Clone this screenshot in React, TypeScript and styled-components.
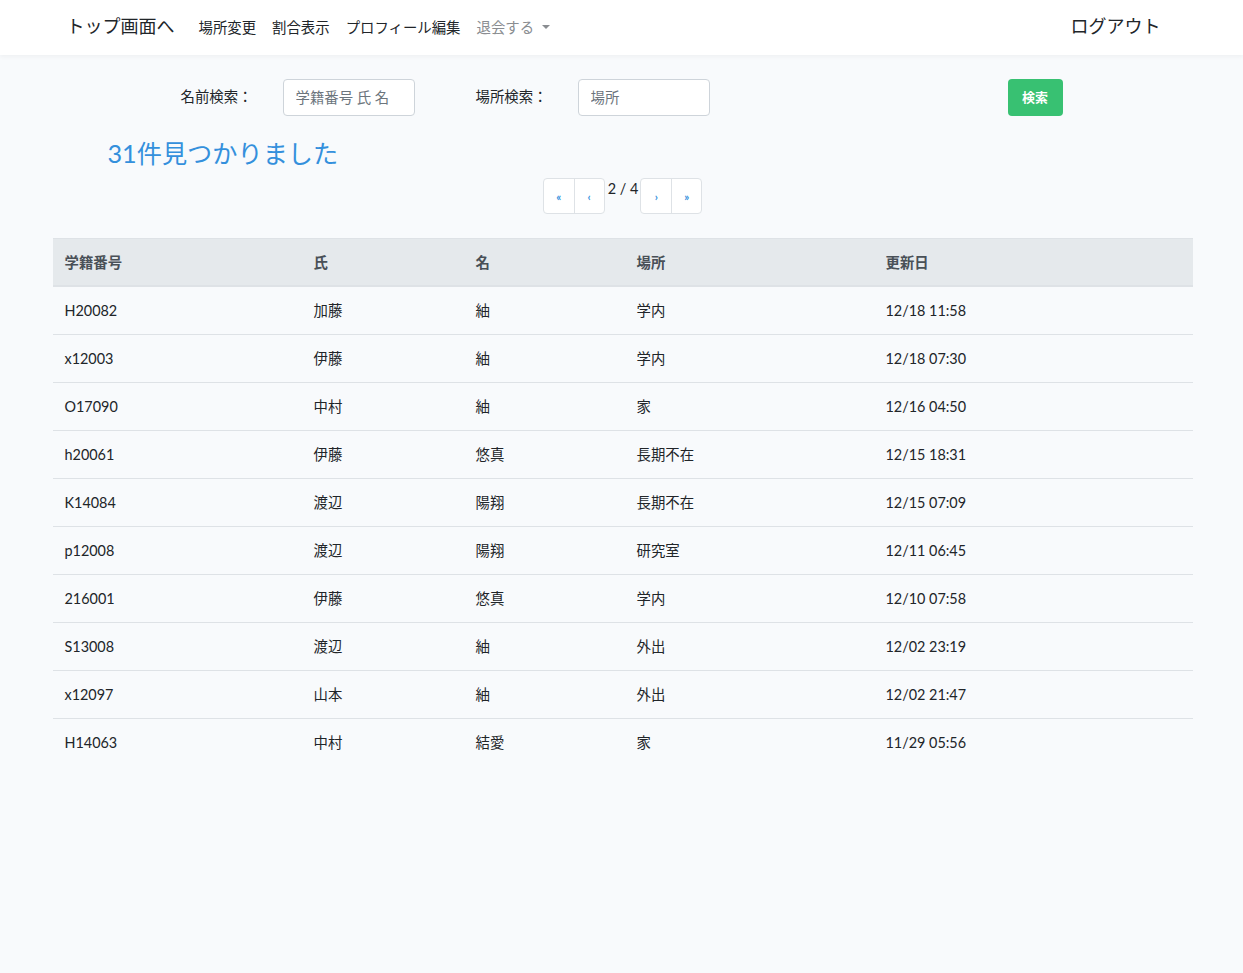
import React from 'react';
import styled, { createGlobalStyle } from 'styled-components';

const GlobalStyle = createGlobalStyle`
  body {
    margin: 0;
    background: #f8fafc;
    color: #212529;
    font-family: Lato, "Noto Sans CJK JP", sans-serif;
    font-size: 14.4px;
    line-height: 1.6;
  }
  * { box-sizing: border-box; }
`;

const Navbar = styled.nav`
  height: 55px;
  background: #fff;
  box-shadow: 0 2px 4px rgba(0, 0, 0, 0.04);
`;

const NavInner = styled.div`
  width: 1140px;
  margin: 0 auto;
  padding: 0 15px;
  height: 100%;
  display: flex;
  align-items: center;
`;

const Brand = styled.a`
  font-size: 18px;
  color: #212529;
  margin-right: 16px;
  padding-bottom: 2px;
`;

const NavLinks = styled.div`
  display: flex;
  align-items: center;
  flex: 1;
`;

const NavLink = styled.a<{ $muted?: boolean }>`
  padding: 0 8px;
  font-size: 14.4px;
  color: ${p => (p.$muted ? '#8a8d91' : '#212529')};
  display: flex;
  align-items: center;
`;

const Caret = styled.span`
  display: inline-block;
  margin-left: 8px;
  border-top: 4.5px solid #8a8d91;
  border-left: 4px solid transparent;
  border-right: 4px solid transparent;
`;

const Logout = styled.a`
  font-size: 18px;
  color: #212529;
  margin-right: 16px;
  padding-bottom: 2px;
`;

const Main = styled.main`
  width: 1140px;
  margin: 0 auto;
  padding-top: 24px;
`;

const SearchRow = styled.form`
  display: flex;
  align-items: center;
  padding-left: 129px;
`;

const Label = styled.label`
  width: 102px;
  font-size: 14.4px;
  padding-bottom: 2px;
`;

const Input = styled.input`
  width: 132px;
  height: 37px;
  border: 1px solid #ced4da;
  border-radius: 4px;
  padding: 0 12px;
  font-family: inherit;
  font-size: 14.4px;
  color: #495057;
  background: #fff;
  margin-right: 61px;
  &::placeholder { color: #6c757d; }
`;

const SearchButton = styled.button`
  margin-left: 237px;
  width: 55px;
  height: 37px;
  border: none;
  border-radius: 4px;
  background: #38c172;
  color: #fff;
  font-family: inherit;
  font-weight: 700;
  font-size: 13px;
  padding-bottom: 3px;
`;

const ResultTitle = styled.h3`
  margin: 22px 0 0 56px;
  font-size: 25.2px;
  font-weight: 400;
  line-height: 1.2;
  color: #3490dc;
`;

const Pager = styled.div`
  display: flex;
  justify-content: center;
  align-items: flex-start;
  margin-top: 10px;
  margin-left: 2px;
`;

const PagerGroup = styled.div`
  display: flex;
  border: 1px solid #dee2e6;
  border-radius: 4px;
  background: #fff;
  overflow: hidden;
`;

const PageButton = styled.a`
  width: 30px;
  height: 34px;
  display: flex;
  align-items: center;
  justify-content: center;
  color: #3490dc;
  font-size: 11px;
  font-weight: 700;
  padding-top: 2px;
  & + & { border-left: 1px solid #dee2e6; }
`;

const PageInfo = styled.span`
  padding: 0 2px 0 3px;
  font-size: 14.4px;
  line-height: 1;
  margin-top: 4px;
`;

const Table = styled.table`
  width: 1140px;
  margin-top: 24px;
  margin-left: 1px;
  border-collapse: collapse;
  font-size: 14.4px;
`;

const Th = styled.th<{ $w: number }>`
  width: ${p => p.$w}px;
  text-align: left;
  padding: 12px 12px 11px;
  line-height: 23px;
  background: #e5e9ec;
  color: #495057;
  font-weight: 700;
  border-top: 1px solid #dee2e6;
  border-bottom: 2px solid #dee2e6;
`;

const Td = styled.td`
  padding: 12px;
  line-height: 23px;
  border-top: 1px solid #dee2e6;
`;

const columns = [
  { label: '学籍番号', w: 249 },
  { label: '氏', w: 162 },
  { label: '名', w: 161 },
  { label: '場所', w: 249 },
  { label: '更新日', w: 319 },
];

const rows = [
  ['H20082', '加藤', '紬', '学内', '12/18 11:58'],
  ['x12003', '伊藤', '紬', '学内', '12/18 07:30'],
  ['O17090', '中村', '紬', '家', '12/16 04:50'],
  ['h20061', '伊藤', '悠真', '長期不在', '12/15 18:31'],
  ['K14084', '渡辺', '陽翔', '長期不在', '12/15 07:09'],
  ['p12008', '渡辺', '陽翔', '研究室', '12/11 06:45'],
  ['216001', '伊藤', '悠真', '学内', '12/10 07:58'],
  ['S13008', '渡辺', '紬', '外出', '12/02 23:19'],
  ['x12097', '山本', '紬', '外出', '12/02 21:47'],
  ['H14063', '中村', '結愛', '家', '11/29 05:56'],
];

const App: React.FC = () => {
  return (
    <>
      <GlobalStyle />
      <Navbar>
        <NavInner>
          <Brand>トップ画面へ</Brand>
          <NavLinks>
            <NavLink>場所変更</NavLink>
            <NavLink>割合表示</NavLink>
            <NavLink>プロフィール編集</NavLink>
            <NavLink $muted>
              退会する<Caret />
            </NavLink>
          </NavLinks>
          <Logout>ログアウト</Logout>
        </NavInner>
      </Navbar>

      <Main>
        <SearchRow onSubmit={e => e.preventDefault()}>
          <Label>名前検索：</Label>
          <Input placeholder="学籍番号 氏 名" />
          <Label>場所検索：</Label>
          <Input placeholder="場所" />
          <SearchButton type="submit">検索</SearchButton>
        </SearchRow>

        <ResultTitle>31件見つかりました</ResultTitle>

        <Pager>
          <PagerGroup>
            <PageButton>«</PageButton>
            <PageButton>‹</PageButton>
          </PagerGroup>
          <PageInfo>2 / 4</PageInfo>
          <PagerGroup>
            <PageButton>›</PageButton>
            <PageButton>»</PageButton>
          </PagerGroup>
        </Pager>

        <Table>
          <thead>
            <tr>
              {columns.map(c => (
                <Th key={c.label} $w={c.w}>{c.label}</Th>
              ))}
            </tr>
          </thead>
          <tbody>
            {rows.map(r => (
              <tr key={r[0]}>
                {r.map((cell, i) => (
                  <Td key={i}>{cell}</Td>
                ))}
              </tr>
            ))}
          </tbody>
        </Table>
      </Main>
    </>
  );
};

export default App;
